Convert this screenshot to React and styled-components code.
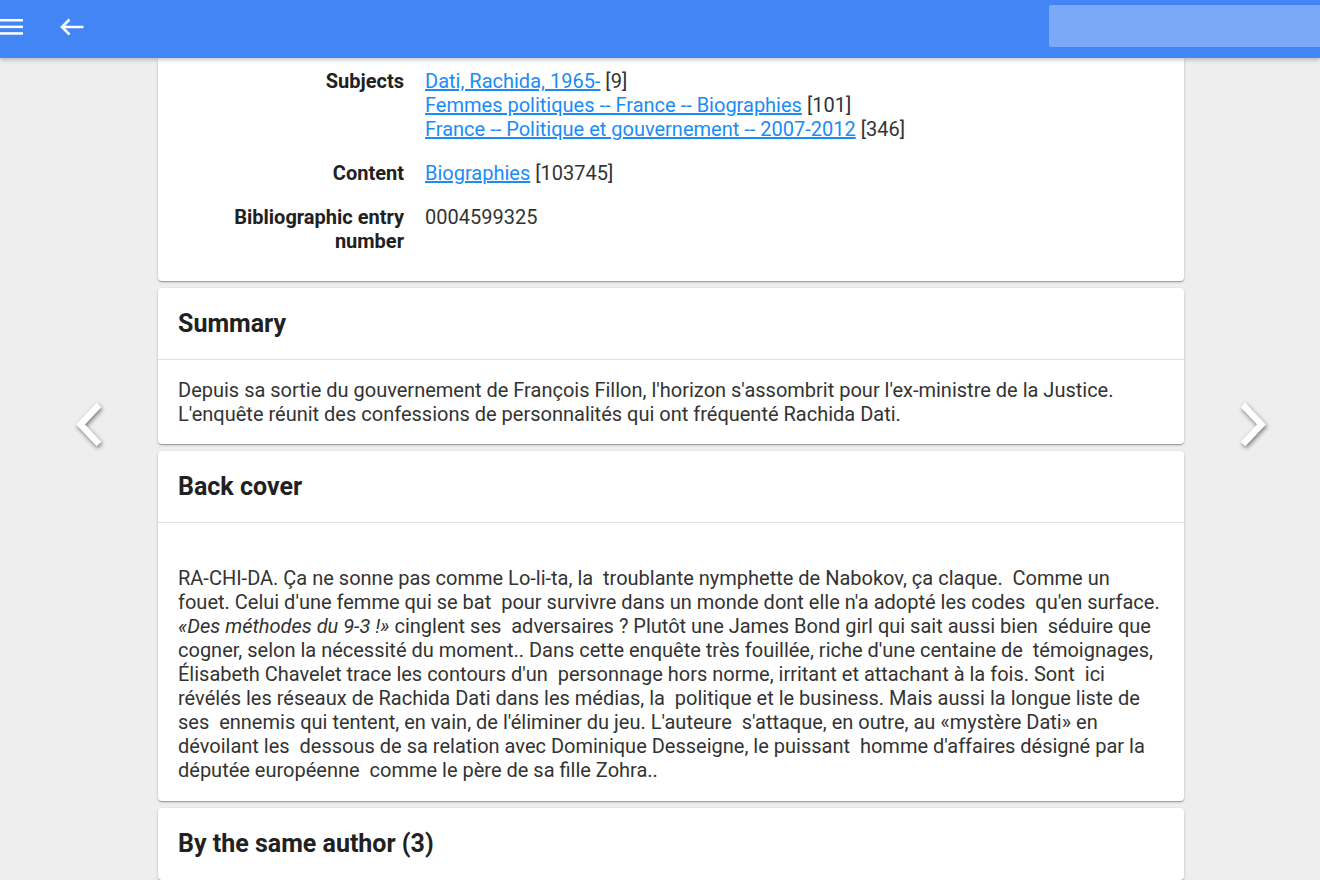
import React from 'react'
import styled, { createGlobalStyle } from 'styled-components'

const GlobalStyle = createGlobalStyle`
  html, body {
    margin: 0;
    padding: 0;
    background: #eeeeee;
    font-family: Roboto, "Liberation Sans", Arial, sans-serif;
    overflow: hidden;
  }
  * { box-sizing: border-box; }
`

const TopBar = styled.header`
  position: relative;
  z-index: 2;
  height: 58px;
  background: #4285f4;
  display: flex;
  align-items: flex-start;
  overflow: hidden;
  box-shadow: 0 2px 4px rgba(0, 0, 0, 0.22);
`

const BarIcon = styled.svg`
  display: block;
  flex: none;
  margin-top: ${p => p.$top || 19}px;
  margin-left: ${p => p.$left || 0}px;
`

const Search = styled.div`
  flex: none;
  margin: 5px -20px 0 auto;
  width: 291px;
  height: 42px;
  border-radius: 2px;
  background: rgba(255, 255, 255, 0.3);
`

const Main = styled.main`
  display: grid;
  grid-template-columns: 158px 1026px 1fr;
  height: calc(100vh - 58px);
  overflow: hidden;
`

const SideNav = styled.div`
  padding-top: 341px;
  padding-left: ${p => p.$left}px;
`

const Chevron = styled.svg`
  display: block;
  overflow: visible;
  filter: drop-shadow(1px 2px 2px rgba(0, 0, 0, 0.5));
`

const Column = styled.div`
  display: flex;
  flex-direction: column;
  gap: 7px;
`

const Card = styled.section`
  flex: none;
  background: #fff;
  border-radius: 4px;
  box-shadow: 0 1px 3px rgba(0, 0, 0, 0.2), 0 1px 1px rgba(0, 0, 0, 0.14), 0 2px 1px -1px rgba(0, 0, 0, 0.12);
`

const InfoCard = styled(Card)`
  border-radius: 0 0 4px 4px;
  padding: 11px 20px 28px;
`

const InfoGrid = styled.dl`
  margin: 0;
  display: grid;
  grid-template-columns: 226px 1fr;
  column-gap: 21px;
  row-gap: 20px;
  font-size: 20px;
  line-height: 24px;
`

const Label = styled.dt`
  margin: 0;
  text-align: right;
  font-weight: 700;
  color: #212121;
`

const Value = styled.dd`
  margin: 0;
  color: #333;
`

const Line = styled.div``

const Link = styled.a`
  color: #1a8cf7;
  text-decoration: underline;
`

const CardHead = styled.h2`
  margin: 0;
  height: 72px;
  padding: 0 20px 1px;
  display: flex;
  align-items: center;
  font-size: 25px;
  font-weight: 700;
  color: #212121;
  border-bottom: ${p => (p.$open ? '1px solid #e0e0e0' : 'none')};
`

const CardBody = styled.div`
  padding: 18px 20px ${p => p.$bottom || 18}px;
  font-size: 20px;
  line-height: 24px;
  color: #333;
  white-space: pre-wrap;
`

const Spacer = styled.div`
  height: 25px;
`

const subjects = [
  ['Dati, Rachida, 1965-', '9'],
  ['Femmes politiques -- France -- Biographies', '101'],
  ['France -- Politique et gouvernement -- 2007-2012', '346'],
]

const backCover = [
  'RA-CHI-DA. Ça ne sonne pas comme Lo-li-ta, la  troublante nymphette de Nabokov, ça claque.  Comme un ',
  "fouet. Celui d'une femme qui se bat  pour survivre dans un monde dont elle n'a adopté les codes  qu'en surface. ",
]

export default function App() {
  return (
    <>
      <GlobalStyle />
      <TopBar>
        <BarIcon width="23" height="16" viewBox="0 0 23 16" $top={19}>
          <rect x="0" y="0" width="23" height="2.5" fill="#fff" />
          <rect x="0" y="6.6" width="23" height="2.5" fill="#fff" />
          <rect x="0" y="13.2" width="23" height="2.5" fill="#fff" />
        </BarIcon>
        <BarIcon width="24" height="18" viewBox="0 0 24 18" $top={18} $left={37}>
          <path d="M23.5 9H2.2M9.5 1.5L2 9l7.5 7.5" stroke="#fff" strokeWidth="2.5" fill="none" />
        </BarIcon>
        <Search />
      </TopBar>
      <Main>
        <SideNav $left={72}>
          <Chevron width="40" height="52" viewBox="0 0 40 52">
            <path d="M27 6L8.5 25.5 27 45" stroke="#fff" strokeWidth="6.5" fill="none" />
          </Chevron>
        </SideNav>
        <Column>
          <InfoCard>
            <InfoGrid>
              <Label>Subjects</Label>
              <Value>
                {subjects.map(([name, count]) => (
                  <Line key={name}>
                    <Link href="#">{name}</Link> [{count}]
                  </Line>
                ))}
              </Value>
              <Label>Content</Label>
              <Value>
                <Link href="#">Biographies</Link> [103745]
              </Value>
              <Label>Bibliographic entry number</Label>
              <Value>0004599325</Value>
            </InfoGrid>
          </InfoCard>
          <Card>
            <CardHead $open>Summary</CardHead>
            <CardBody>
              Depuis sa sortie du gouvernement de François Fillon, l'horizon s'assombrit pour l'ex-ministre de la Justice. L'enquête réunit des confessions de personnalités qui ont fréquenté Rachida Dati.
            </CardBody>
          </Card>
          <Card>
            <CardHead $open>Back cover</CardHead>
            <CardBody $bottom={19}>
              <Spacer />
              {backCover.join('')}
              <em>«Des méthodes du 9-3 !»</em>
              {" cinglent ses  adversaires ? Plutôt une James Bond girl qui sait aussi bien  séduire que cogner, selon la nécessité du moment.. Dans cette enquête très fouillée, riche d'une centaine de  témoignages, Élisabeth Chavelet trace les contours d'un  personnage hors norme, irritant et attachant à la fois. Sont  ici révélés les réseaux de Rachida Dati dans les médias, la  politique et le business. Mais aussi la longue liste de ses  ennemis qui tentent, en vain, de l'éliminer du jeu. L'auteure  s'attaque, en outre, au «mystère Dati» en dévoilant les  dessous de sa relation avec Dominique Desseigne, le puissant  homme d'affaires désigné par la députée européenne  comme le père de sa fille Zohra.."}
            </CardBody>
          </Card>
          <Card>
            <CardHead>By the same author (3)</CardHead>
          </Card>
        </Column>
        <SideNav $left={48}>
          <Chevron width="40" height="52" viewBox="0 0 40 52">
            <path d="M11 6L29.5 25.5 11 45" stroke="#fff" strokeWidth="6.5" fill="none" />
          </Chevron>
        </SideNav>
      </Main>
    </>
  )
}
